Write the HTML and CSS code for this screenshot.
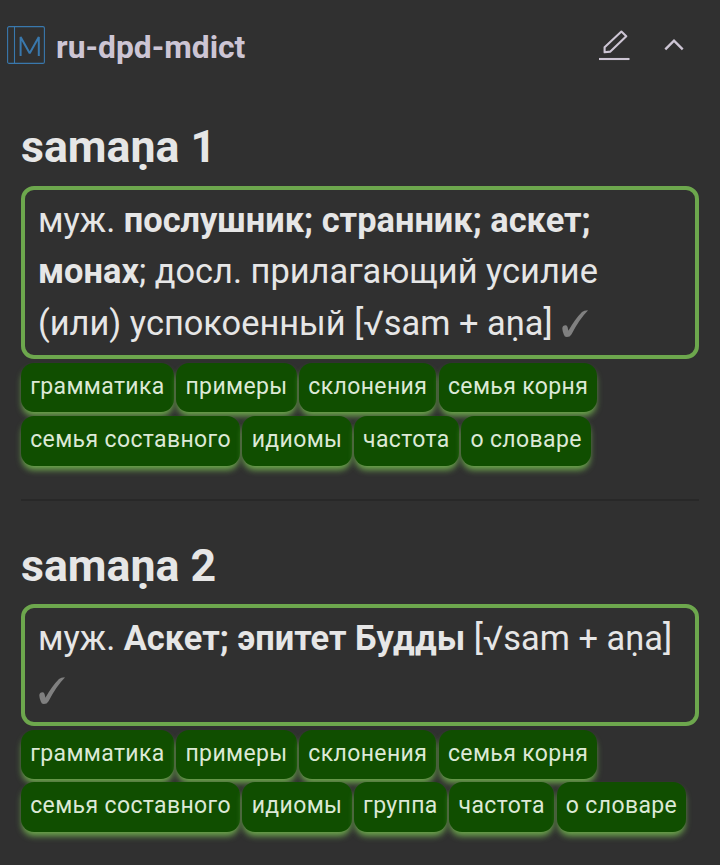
FILE: index.html
```html
<!DOCTYPE html>
<html lang="ru">
<head>
<meta charset="utf-8">
<title>ru-dpd-mdict</title>
<link rel="stylesheet" href="styles.css">
</head>
<body>
<header class="bar">
  <svg class="logo" viewBox="0 0 38 38" fill="none" stroke="#3978ad">
    <rect x=".6" y=".6" width="36.8" height="36.8" rx="1.5" stroke-width="1.1"/>
    <path d="M7.5 1v36" stroke-width="1.1"/>
    <path d="M13.6 30V11L22.7 27.3L31.8 11V30" stroke-width="2" stroke-linejoin="bevel"/>
  </svg>
  <h1 class="title">ru-dpd-mdict</h1>
  <svg class="edit" viewBox="0 0 32 32" fill="none" stroke="#cdc5d4" stroke-width="2.1" stroke-linejoin="round">
    <path d="M5.6 23.3V18.2L22.4 2.6L27.3 7.2L11.4 22.6Z"/>
    <path d="M0 30H30.5"/>
  </svg>
  <svg class="chevron" viewBox="0 0 20 12" fill="none" stroke="#cdc5d4" stroke-width="2.4">
    <path d="M1.3 10.3L10 1.7L18.7 10.3"/>
  </svg>
</header>
<main class="content">
  <section class="entry">
    <h2 class="word">samaṇa 1</h2>
    <p class="summary">муж. <b>послушник; странник; аскет; монах</b>; досл. прилагающий усилие (или) успокоенный [√sam + aṇa] <svg class="check" viewBox="0 0 26 27"><path d="M.3 18.2Q.5 15.2 3.6 15.2Q5.2 15.3 5.6 17.3L6.4 20.8Q13 9 20 2Q22 .2 25.7.2V.8Q17.5 9 9.4 24.5Q8 27 4.8 27Q2.5 27 1.8 24.5Q.2 20 .3 18.2Z"/></svg></p>
    <div class="buttons">
      <a class="button">грамматика</a><a class="button">примеры</a><a class="button">склонения</a><a class="button">семья корня</a><a class="button">семья составного</a><a class="button">идиомы</a><a class="button">частота</a><a class="button">о словаре</a>
    </div>
  </section>
  <hr class="rule">
  <section class="entry">
    <h2 class="word">samaṇa 2</h2>
    <p class="summary">муж. <b>Аскет; эпитет Будды</b> [√sam + aṇa] <svg class="check" viewBox="0 0 26 27"><path d="M.3 18.2Q.5 15.2 3.6 15.2Q5.2 15.3 5.6 17.3L6.4 20.8Q13 9 20 2Q22 .2 25.7.2V.8Q17.5 9 9.4 24.5Q8 27 4.8 27Q2.5 27 1.8 24.5Q.2 20 .3 18.2Z"/></svg></p>
    <div class="buttons buttons-tight">
      <a class="button">грамматика</a><a class="button">примеры</a><a class="button">склонения</a><a class="button">семья корня</a><a class="button">семья составного</a><a class="button">идиомы</a><a class="button">группа</a><a class="button">частота</a><a class="button">о словаре</a>
    </div>
  </section>
</main>
</body>
</html>
```
FILE: styles.css
```css
* { box-sizing: border-box; }
body {
  margin: 0;
  height: 865px;
  overflow: hidden;
  background: #303030;
  color: #e6e6e6;
  font-family: Roboto, "Noto Sans", sans-serif;
}
.bar {
  display: flex;
  align-items: center;
  height: 92px;
  padding: 0 36px 2px 7px;
}
.logo { width: 38px; height: 38px; }
.title {
  flex: 1;
  margin: 4px 0 0 11px;
  font-size: 31.8px;
  line-height: 40px;
  font-weight: 700;
  color: #cdc5d4;
}
.edit { width: 32px; height: 32px; margin-right: 33px; }
.chevron { width: 20px; height: 12px; margin-top: -1px; }
.content { padding: 24px 21px 0; }
.word {
  margin: 0;
  height: 69.5px;
  font-size: 44.7px;
  line-height: 62px;
  font-weight: 700;
}
.summary {
  margin: 0;
  padding: 5.2px 13px;
  border: 4px solid #6da74d;
  border-radius: 13px;
  font-size: 34.4px;
  line-height: 51.6px;
}
.check {
  width: 26px;
  height: 27px;
  margin-left: 1px;
  vertical-align: -2px;
  fill: #808080;
}
.buttons {
  display: flex;
  flex-wrap: wrap;
  gap: 4px 2.4px;
  padding-top: 4px;
}
.buttons-tight { row-gap: 3px; }
.button {
  height: 49.5px;
  padding: 0 9.2px;
  border-radius: 13px;
  background: #104e00;
  box-shadow: 0 5px 6px -1px #6da74d;
  color: #dce9d6;
  font-size: 23px;
  line-height: 47px;
  letter-spacing: .37px;
}
.rule {
  height: 2px;
  margin: 33px 0 34px;
  border: 0;
  background: #282828;
}
```
